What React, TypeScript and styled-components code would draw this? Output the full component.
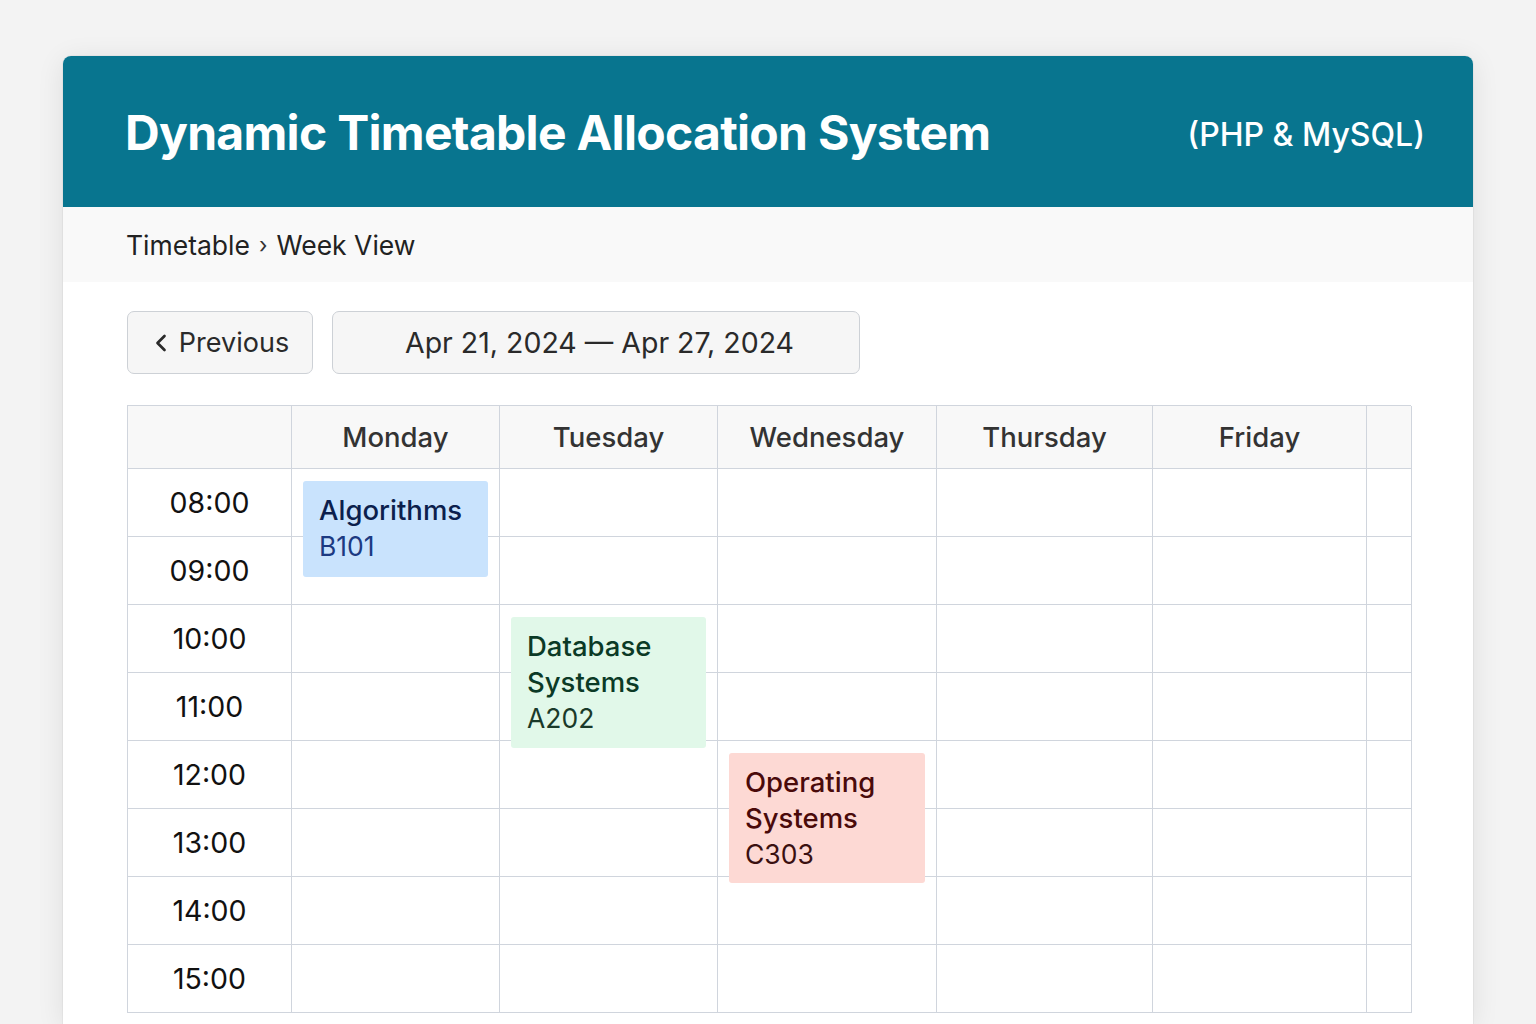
import React from "react";
import styled, { createGlobalStyle } from "styled-components";
import { ChevronLeft } from "lucide-react";

const GlobalStyle = createGlobalStyle`
  html, body { margin: 0; padding: 0; }
  body {
    background: #f3f3f3;
    font-family: Inter, "Noto Sans", "Liberation Sans", sans-serif;
    color: #222;
  }
  * { box-sizing: border-box; }
`;

const Page = styled.div`
  padding: 56px 63px 0 63px;
  min-height: 1024px;
`;

const Card = styled.div`
  background: #ffffff;
  border-radius: 8px 8px 0 0;
  box-shadow: 0 4px 28px rgba(0, 0, 0, 0.09), 0 0 0 1px rgba(0, 0, 0, 0.03);
  overflow: hidden;
  min-height: 968px;
`;

const Header = styled.header`
  height: 151px;
  background: #08758f;
  display: flex;
  align-items: center;
  justify-content: space-between;
  padding: 2px 48px 0 62px;
  color: #ffffff;
`;

const Title = styled.h1`
  margin: 0;
  font-size: 48px;
  font-weight: 700;
  letter-spacing: -0.7px;
`;

const Subtitle = styled.span`
  font-size: 32px;
  font-weight: 500;
  padding-top: 3px;
`;

const Breadcrumb = styled.nav`
  height: 75px;
  background: #f9f9f9;
  display: flex;
  align-items: center;
  padding-left: 63px;
  font-size: 26.5px;
  color: #222;
  gap: 9px;
`;

const Sep = styled.span`
  font-size: 22px;
  color: #333;
`;

const Content = styled.main`
  padding: 29px 62px 0 64px;
`;

const Toolbar = styled.div`
  display: flex;
  gap: 19px;
  margin-bottom: 31px;
`;

const Button = styled.button<{ $w: number; $size: number; $shift?: number }>`
  width: ${(p) => p.$w}px;
  height: 63px;
  border: 1.5px solid #cdd1d6;
  border-radius: 7px;
  background: #f6f6f6;
  display: flex;
  align-items: center;
  justify-content: center;
  gap: 4px;
  font-family: inherit;
  font-size: ${(p) => p.$size}px;
  color: #2a2a2a;
  padding: 0 0 0 ${(p) => p.$shift ?? 0}px;
`;

const Grid = styled.div`
  display: grid;
  grid-template-columns: 164px 208px 218px 219px 216px 214px 45px;
  grid-auto-rows: 68px;
  grid-template-rows: 63px;
  border-top: 1.5px solid #d0d5dd;
  border-left: 1.5px solid #d0d5dd;
  width: 1284px;
`;

const Cell = styled.div<{ $head?: boolean }>`
  border-right: 1.5px solid #d0d5dd;
  border-bottom: 1.5px solid #d0d5dd;
  background: ${(p) => (p.$head ? "#f8f8f8" : "#ffffff")};
  display: flex;
  align-items: center;
  justify-content: center;
  font-size: 27.5px;
  font-weight: 500;
  color: #333;
  position: relative;
`;

const TimeCell = styled(Cell)`
  font-weight: 400;
  font-size: 28.5px;
  color: #111;
`;

const Event = styled.div<{ $bg: string; $fg: string; $sub: string; $h: number }>`
  position: absolute;
  z-index: 1;
  top: 12px;
  left: 11px;
  right: 11px;
  height: ${(p) => p.$h}px;
  background: ${(p) => p.$bg};
  border-radius: 3px;
  padding: 11px 16px;
  display: flex;
  flex-direction: column;
  align-items: flex-start;
  justify-content: flex-start;
  color: ${(p) => p.$fg};
  font-size: 27.5px;
  line-height: 36px;
  text-align: left;

  span {
    font-weight: 400;
    color: ${(p) => p.$sub};
    font-size: 26.5px;
  }
`;

const EventTitle = styled.div`
  font-weight: 500;
`;

const days = ["Monday", "Tuesday", "Wednesday", "Thursday", "Friday", ""];
const times = ["08:00", "09:00", "10:00", "11:00", "12:00", "13:00", "14:00", "15:00"];

type Ev = { day: number; row: number; title: string[]; room: string; bg: string; fg: string; sub: string; h: number };

const events: Ev[] = [
  { day: 0, row: 0, title: ["Algorithms"], room: "B101", bg: "#c9e3fd", fg: "#0c1f4d", sub: "#1c3a82", h: 96 },
  { day: 1, row: 2, title: ["Database", "Systems"], room: "A202", bg: "#e1f8e9", fg: "#0b3a26", sub: "#1a3a2a", h: 131 },
  { day: 2, row: 4, title: ["Operating", "Systems"], room: "C303", bg: "#fdd9d4", fg: "#4a0a0a", sub: "#3a1010", h: 130 },
];

export default function App() {
  return (
    <>
      <GlobalStyle />
      <Page>
        <Card>
          <Header>
            <Title>Dynamic Timetable Allocation System</Title>
            <Subtitle>(PHP &amp; MySQL)</Subtitle>
          </Header>
          <Breadcrumb>
            <span>Timetable</span>
            <Sep>›</Sep>
            <span>Week View</span>
          </Breadcrumb>
          <Content>
            <Toolbar>
              <Button $w={186} $size={27} $shift={4}>
                <ChevronLeft size={28} strokeWidth={2.3} style={{ marginLeft: -8 }} />
                Previous
              </Button>
              <Button $w={528} $size={28.5} $shift={7}>Apr 21, 2024 — Apr 27, 2024</Button>
            </Toolbar>
            <Grid>
              <Cell $head />
              {days.map((d, i) => (
                <Cell $head key={"h" + i}>{d}</Cell>
              ))}
              {times.map((t, r) => (
                <React.Fragment key={t}>
                  <TimeCell>{t}</TimeCell>
                  {days.map((_, c) => {
                    const ev = events.find((e) => e.day === c && e.row === r);
                    return (
                      <Cell key={c}>
                        {ev && (
                          <Event $bg={ev.bg} $fg={ev.fg} $sub={ev.sub} $h={ev.h}>
                            {ev.title.map((l) => (
                              <EventTitle key={l}>{l}</EventTitle>
                            ))}
                            <span>{ev.room}</span>
                          </Event>
                        )}
                      </Cell>
                    );
                  })}
                </React.Fragment>
              ))}
            </Grid>
          </Content>
        </Card>
      </Page>
    </>
  );
}
